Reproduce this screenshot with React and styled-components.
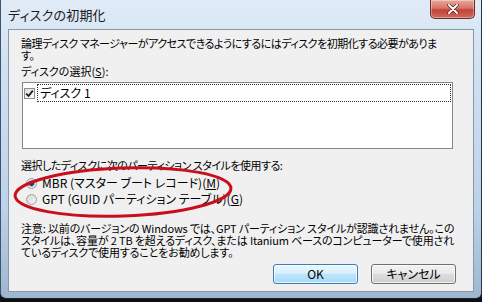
import styled, { createGlobalStyle } from "styled-components";

const GlobalStyle = createGlobalStyle`
  html, body {
    margin: 0;
    padding: 0;
    background: #0d0f14;
  }
  #root {
    width: 482px;
    height: 302px;
    overflow: hidden;
  }
`;

const uiFont = `"Noto Sans CJK JP", "Liberation Sans", sans-serif`;

const Window = styled.div`
  box-sizing: border-box;
  width: 482px;
  height: 299px;
  display: flex;
  flex-direction: column;
  padding: 0 7px 6px 7px;
  background: linear-gradient(to bottom, #e0ebf7 0%, #cfe0f2 25%, #bcd2ea 70%, #9fb6d0 100%);
  border-left: 1px solid #41526c;
  border-right: 1px solid #2a3345;
  border-bottom: 1px solid #1c2230;
  border-radius: 0 0 6px 6px;
  font-family: ${uiFont};
  font-feature-settings: "palt";
  color: #000;
`;

const TitleBar = styled.div`
  height: 29px;
  display: flex;
  justify-content: space-between;
  align-items: flex-start;
  flex-shrink: 0;
`;

const Title = styled.div`
  margin-top: 7px;
  font-size: 13px;
  line-height: 16px;
  color: #1b1b1b;
  letter-spacing: 0.2px;
`;

const CloseButton = styled.div`
  box-sizing: border-box;
  width: 45px;
  height: 19px;
  margin-right: -1px;
  display: flex;
  align-items: center;
  justify-content: center;
  border: 1px solid #6a2c27;
  border-top: none;
  border-radius: 0 0 5px 5px;
  background: linear-gradient(to bottom, #e7a89f 0%, #d67568 45%, #c2433a 55%, #cf6a58 100%);
  box-shadow: inset 0 0 0 1px rgba(255, 255, 255, 0.35);
`;

const Client = styled.div`
  flex: 1;
  display: flex;
  flex-direction: column;
  background: #f0f0f0;
  border: 1px solid #8796a8;
  padding: 7px 17px 0 12px;
  font-size: 11px;
  line-height: 12px;
`;

const Para = styled.div`
  white-space: nowrap;
  margin-top: ${(p) => p.mt || 0}px;
  letter-spacing: ${(p) => p.spacing ?? -0.5}px;
`;

const ListBox = styled.div`
  box-sizing: border-box;
  height: 67px;
  margin: 5px 3px 0 1px;
  background: #fff;
  border: 1px solid #828790;
  padding: 1px 1px;
`;

const ListItem = styled.div`
  display: flex;
  align-items: center;
  height: 18px;
  gap: 2px;
`;

const CheckBox = styled.div`
  box-sizing: border-box;
  width: 11px;
  height: 11px;
  border: 1px solid #8e8f8f;
  background: linear-gradient(135deg, #dcdcdc, #fff);
  display: flex;
  align-items: center;
  justify-content: center;
  flex-shrink: 0;
`;

const FocusLabel = styled.div`
  flex: 1;
  height: 18px;
  box-sizing: border-box;
  border: 1px dotted #333;
  padding-left: 2px;
  display: flex;
  align-items: center;
  font-size: 12px;
`;

const RadioGroup = styled.div`
  position: relative;
  margin-top: 4px;
  display: flex;
  flex-direction: column;
`;

const RadioRow = styled.div`
  display: flex;
  align-items: center;
  height: 16px;
  gap: 5px;
  padding-left: 5px;
  font-size: 12px;
`;

const Radio = styled.div`
  box-sizing: border-box;
  width: 11px;
  height: 11px;
  border-radius: 50%;
  border: 1px solid #9aa0a6;
  background: ${(p) =>
    p.checked
      ? "radial-gradient(circle, #1e3d5c 0 2px, #6a86a4 2.5px, #dfe6ee 3.5px, #f4f4f4 100%)"
      : "linear-gradient(135deg, #d4d4d4, #f7f7f7)"};
  flex-shrink: 0;
`;

const Annotation = styled.svg`
  position: absolute;
  left: -9px;
  top: -11px;
  pointer-events: none;
  overflow: visible;
`;

const ButtonRow = styled.div`
  display: flex;
  justify-content: flex-end;
  gap: 13px;
  margin-top: 6px;
`;

const Button = styled.div`
  box-sizing: border-box;
  width: 85px;
  height: 20px;
  display: flex;
  align-items: center;
  justify-content: center;
  border-radius: 3px;
  font-size: 12px;
  border: 1px solid ${(p) => (p.primary ? "#3c7fb1" : "#707070")};
  background: ${(p) =>
    p.primary
      ? "linear-gradient(to bottom, #eaf6fd 0%, #d9f0fc 45%, #bee6fd 50%, #a7d9f5 100%)"
      : "linear-gradient(to bottom, #f2f2f2 0%, #ebebeb 45%, #dddddd 50%, #cfcfcf 100%)"};
  box-shadow: inset 0 0 0 1px rgba(255, 255, 255, 0.7);
`;

const App = () => (
  <>
    <GlobalStyle />
    <Window>
      <TitleBar>
        <Title>ディスクの初期化</Title>
        <CloseButton>
          <svg width="12" height="10" viewBox="0 0 12 10">
            <path d="M2 1 L10 9 M10 1 L2 9" stroke="#5a1a14" strokeWidth="3.4" strokeLinecap="round" />
            <path d="M2 1 L10 9 M10 1 L2 9" stroke="#fff" strokeWidth="2" strokeLinecap="round" />
          </svg>
        </CloseButton>
      </TitleBar>
      <Client>
        <Para>
          論理ディスク マネージャーがアクセスできるようにするにはディスクを初期化する必要がありま
          <br />
          す。
        </Para>
        <Para mt={4} spacing={0}>ディスクの選択(<u>S</u>):</Para>
        <ListBox>
          <ListItem>
            <CheckBox>
              <svg width="9" height="9" viewBox="0 0 9 9">
                <path d="M1.2 4.6 L3.6 7 L7.8 1.6" fill="none" stroke="#1c1c1c" strokeWidth="1.8" />
              </svg>
            </CheckBox>
            <FocusLabel>ディスク 1</FocusLabel>
          </ListItem>
        </ListBox>
        <Para mt={10}>選択したディスクに次のパーティション スタイルを使用する:</Para>
        <RadioGroup>
          <RadioRow>
            <Radio checked />
            <span>MBR (マスター ブート レコード)(<u>M</u>)</span>
          </RadioRow>
          <RadioRow>
            <Radio />
            <span>GPT (GUID パーティション テーブル)(<u>G</u>)</span>
          </RadioRow>
          <Annotation width="224" height="58">
            <ellipse
              cx="111"
              cy="28"
              rx="108"
              ry="24"
              transform="rotate(-2 111 28)"
              fill="none"
              stroke="#c8101c"
              strokeWidth="3"
            />
          </Annotation>
        </RadioGroup>
        <Para mt={15} spacing={-0.15}>
          注意: 以前のバージョンの Windows では、GPT パーティション スタイルが認識されません。この
          <br />
          スタイルは、容量が 2 TB を超えるディスク、または Itanium ベースのコンピューターで使用され
          <br />
          ているディスクで使用することをお勧めします。
        </Para>
        <ButtonRow>
          <Button primary>OK</Button>
          <Button>キャンセル</Button>
        </ButtonRow>
      </Client>
    </Window>
  </>
);

export default App;
